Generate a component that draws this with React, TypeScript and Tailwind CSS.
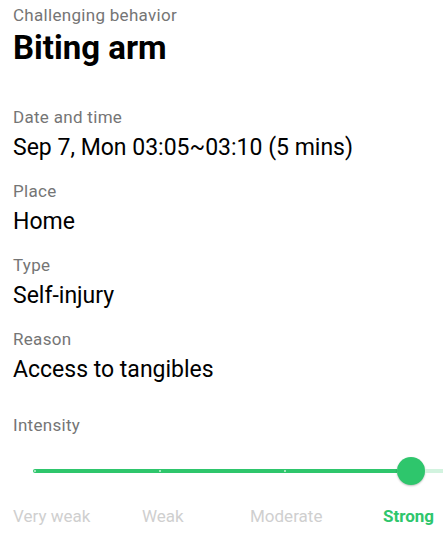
import React from 'react';

const fields = [
  { label: 'Date and time', value: 'Sep 7, Mon 03:05~03:10 (5 mins)' },
  { label: 'Place', value: 'Home' },
  { label: 'Type', value: 'Self-injury' },
  { label: 'Reason', value: 'Access to tangibles' },
];

const levels = ['Very weak', 'Weak', 'Moderate', 'Strong'];

const App: React.FC = () => {
  const selected = 3;
  return (
    <div className="w-[443px] h-[541px] bg-white overflow-hidden font-['Roboto',sans-serif]">
      <div className="px-[13px]">
        <div className="pt-[4px] text-[17px] leading-[22px] tracking-[0.3px] text-[#757575]">
          Challenging behavior
        </div>
        <h1 className="mt-[2px] text-[33px] leading-[40px] font-bold text-black">Biting arm</h1>

        <div className="mt-[38px] flex flex-col gap-[17px]">
          {fields.map((f) => (
            <div key={f.label}>
              <div className="text-[17px] leading-[22px] tracking-[0.3px] text-[#757575]">{f.label}</div>
              <div className="mt-[5px] text-[23px] leading-[30px] text-black">{f.value}</div>
            </div>
          ))}
        </div>

        <div className="mt-[29px] text-[17px] leading-[22px] tracking-[0.3px] text-[#757575]">Intensity</div>
      </div>

      {/* slider */}
      <div className="mt-[19px] h-[32px] pl-[33px] flex items-center">
        <div className="w-[364px] h-[4px] rounded-l-full bg-[#2ec66c] flex items-center gap-[123px] pl-[1px]">
          <span className="w-[2px] h-[2px] rounded-full bg-[#c8f0d8]" />
          <span className="w-[2px] h-[2px] rounded-full bg-[#c8f0d8]" />
          <span className="w-[2px] h-[2px] rounded-full bg-[#c8f0d8]" />
        </div>
        <div className="w-[28px] h-[28px] shrink-0 rounded-full bg-[#2ec66c] shadow-[0_1px_2px_rgba(0,0,0,0.25)]" />
        <div className="flex-1 h-[4px] bg-[#d2f3df]" />
      </div>

      <div className="mt-[18px] pl-[13px] grid grid-cols-[129px_108px_133px_auto] text-[17px] leading-[22px]">
        {levels.map((l, i) => (
          <div
            key={l}
            className={i === selected ? 'font-bold text-[#2ec66c]' : 'text-[#cfcfcf]'}
          >
            {l}
          </div>
        ))}
      </div>
    </div>
  );
};

export default App;
